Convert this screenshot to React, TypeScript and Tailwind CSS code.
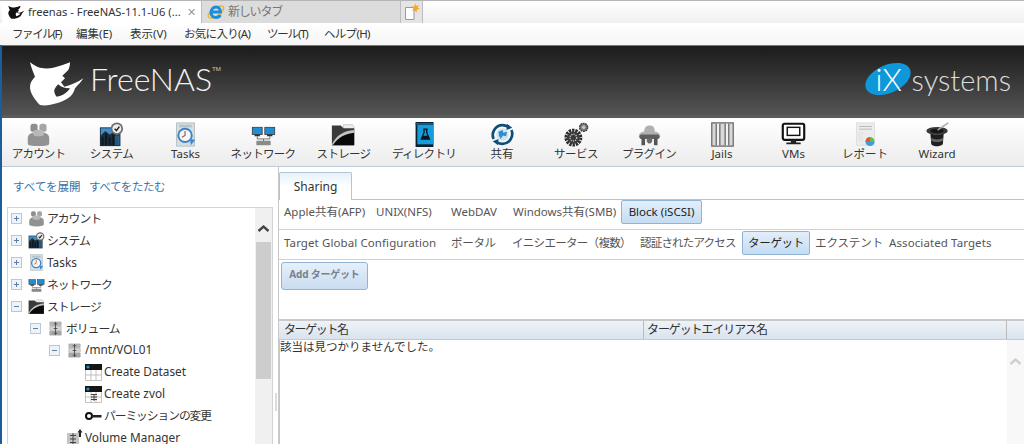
import React from "react";

const jp = "font-['Noto_Sans','Noto_Sans_CJK_JP',sans-serif]";

function Shark({ size = 56, color = "#fff", hole = "#2a2a2a" }: { size?: number; color?: string; hole?: string }) {
  return (
    <svg width={size} height={size * 48 / 56} viewBox="0 0 56 48" className="shrink-0">
      <path fill={color} d="M1 2.3 C5 5 8 7 11 7.7 C16 8.8 20 8.8 24.3 7.7 C30 6.4 36 4.5 41 2.3 C41 5 40.5 8 39.3 10 L33.3 15.7 L36 18.3 L32 22.3 L35.3 26.7 C42 25 49 22 54.3 18.3 C52 22 49 25 46 28.3 C45 32 43.5 34.5 41 36.7 C37 40 32 42 27.7 43.3 C22 45 16 46 11 45 C8 42 6 39.5 4.3 36.7 C2 33 1 30 1 26.7 C1 23 3 20 6 16.7 C4 12 2 7 1 2.3 Z" />
      <path fill={hole} d="M29.3 24.3 C32 27 36 28.5 41 28.3 C38 33 33 36 27.7 36.7 C26 35 25 32 25.3 30 C26 28 27.5 26 29.3 24.3 Z" />
    </svg>
  );
}

function IELogo() {
  return (
    <svg width="18" height="18" viewBox="0 0 18 18" className="shrink-0">
      <ellipse cx="9" cy="9" rx="9" ry="4" fill="none" stroke="#f0b429" strokeWidth="1.4" transform="rotate(-35 9 9)" />
      <path fill="none" stroke="#1c8fdc" strokeWidth="3" d="M4.5 9 H13.5 C13.5 6 11.5 4 9 4 C6 4 4 6.5 4 9.5 C4 12.5 6 14.5 9 14.5 C11 14.5 12.5 13.6 13.3 12" />
    </svg>
  );
}

function NewTabIcon() {
  return (
    <svg width="18" height="18" viewBox="0 0 18 18" className="shrink-0">
      <path d="M2.5 4.5 H11 V16.5 H2.5 Z" fill="#fff" stroke="#9a9a9a" />
      <path d="M12 0 L13 3 L16 2 L14.5 4.5 L17 6 L14 6.5 L13.5 9.5 L11.5 7 L9 8 L10.5 5.5 L8.5 3.5 L11.5 3.5 Z" fill="#f5a623" />
    </svg>
  );
}

const Account = ({ s = 28 }: { s?: number }) => (
  <svg width={s} height={s} viewBox="0 0 28 28" className="shrink-0">
    <rect x="5" y="2" width="8" height="9" rx="3" fill="#8e8e8e" />
    <rect x="15" y="2" width="8" height="9" rx="3" fill="#a5a5a5" />
    <path d="M2 24 V18 C2 14 6 12 9 12 H19 C22 12 26 14 26 18 V24 C26 26 22 27 14 27 C6 27 2 26 2 24 Z" fill="#929292" />
    <rect x="8" y="9" width="12" height="7" rx="3" fill="#b8b8b8" />
  </svg>
);
const SystemI = ({ s = 28 }: { s?: number }) => (
  <svg width={s} height={s} viewBox="0 0 28 28" className="shrink-0">
    <rect x="1" y="6" width="23" height="21" fill="#1b2f3f" />
    <path d="M2 15 L7 10 L12 14 L17 11 L23 14 V7 H2 Z" fill="#3f90c8" />
    <path d="M3 26 V17 H5 V26 Z M7 26 V13 H9 V26 Z M11 26 V17 H13 V26 Z M15 26 V14 H17 V26 Z M19 26 V17 H21 V26 Z" fill="#0d1720" />
    <path d="M18 26 V15 H23 V26 Z" fill="#2f8cc4" opacity=".55" />
    <circle cx="20" cy="7.5" r="7" fill="#6f6f6f" />
    <circle cx="20" cy="7.5" r="5" fill="#eeeeee" />
    <path d="M17.5 7.5 L19.5 9.7 L22.8 5.2" stroke="#222" strokeWidth="1.7" fill="none" />
  </svg>
);
const TasksI = ({ s = 28 }: { s?: number }) => (
  <svg width={s} height={s} viewBox="0 0 28 28" className="shrink-0">
    <rect x="4" y="1" width="20" height="26" fill="#d5dfe0" stroke="#b4bec0" />
    <rect x="7" y="3" width="14" height="3" fill="#b4c4c8" />
    <circle cx="13.5" cy="15" r="7.5" fill="#f7f7f7" stroke="#3f83c4" strokeWidth="2.2" />
    <path d="M13.5 10 V15 L10 17" stroke="#b5562a" strokeWidth="1.3" fill="none" />
    <path d="M19 19 L25 20 L20 26 Z" fill="#3f8ad0" />
  </svg>
);
const NetworkI = ({ s = 28 }: { s?: number }) => (
  <svg width={s} height={s} viewBox="0 0 28 28" className="shrink-0">
    <rect x="1.5" y="6" width="11" height="8" fill="#1f8ed6" stroke="#444" />
    <rect x="15.5" y="6" width="11" height="8" fill="#1f8ed6" stroke="#444" />
    <path d="M4 14 H10 V16 H4 Z M18 14 H24 V16 H18 Z" fill="#333" />
    <path d="M7 16 V19 H21 V16 M14 19 V22" stroke="#666" fill="none" />
    <rect x="6" y="21" width="16" height="5" fill="#8a8a8a" />
  </svg>
);
const StorageI = ({ s = 28 }: { s?: number }) => (
  <svg width={s} height={s} viewBox="0 0 28 28" className="shrink-0">
    <path d="M14 3 H24 L26 6 V11 H14 Z" fill="#ececec" stroke="#c8c8c8" />
    <path d="M1 4 H11 L14 7 H26 V26 H1 Z" fill="#3a3a3a" />
    <path d="M1 26 C8 17 16 13 26 12 V26 Z" fill="#0a0a0a" />
    <path d="M1 25 C6 15 14 10 26 9 V12 C16 13 8 17 2 26 Z" fill="#c4c4c4" />
  </svg>
);
const DirectoryI = ({ s = 28 }: { s?: number }) => (
  <svg width={s} height={s} viewBox="0 0 28 28" className="shrink-0">
    <rect x="4" y="0" width="20" height="28" fill="#0f1f2b" />
    <rect x="6" y="3" width="18" height="22" fill="#139ddd" />
    <rect x="4" y="1" width="20" height="2" fill="#0e5f88" />
    <path d="M12.5 8 H17.5 M13.5 8 V12 L10.5 19 H19.5 L16.5 12 V8" stroke="#0b1620" strokeWidth="1.5" fill="none" />
    <path d="M12.5 15.5 H17.5 L19.5 19 H10.5 Z" fill="#0b1620" />
  </svg>
);
const ShareI = ({ s = 28 }: { s?: number }) => (
  <svg width={s} height={s} viewBox="0 0 28 28" className="shrink-0">
    <circle cx="14" cy="14" r="7" fill="#cfe3f1" />
    <path d="M9.5 11 L14 9 L15 12 L19 11 L18 16 L14.5 15 L12 19 L10 15 Z" fill="#2f8dcf" />
    <path d="M4 19 C1 12 6 3.5 14 3.5 C16.5 3.5 18.5 4.3 20.5 5.5" stroke="#0e4f7a" strokeWidth="3" fill="none" />
    <path d="M24 9 C27 16 22 24.5 14 24.5 C11.5 24.5 9.5 23.7 7.5 22.5" stroke="#0e4f7a" strokeWidth="3" fill="none" />
    <path d="M19 2 L25 6.5 L18.5 9 Z M9 26 L3 21.5 L9.5 19 Z" fill="#0e4f7a" />
  </svg>
);
const ServiceI = ({ s = 28 }: { s?: number }) => (
  <svg width={s} height={s} viewBox="0 0 28 28" className="shrink-0">
    <circle cx="10.5" cy="17.5" r="8" fill="none" stroke="#2c2c2c" strokeWidth="4" strokeDasharray="2.6 1" />
    <circle cx="10.5" cy="17.5" r="7" fill="#3a3a3a" />
    <circle cx="10.5" cy="17.5" r="3.8" fill="none" stroke="#bbb" strokeWidth="1.5" strokeDasharray="1.5 1" />
    <circle cx="22" cy="6" r="4.5" fill="#777" stroke="#444" strokeWidth="1.6" strokeDasharray="2 .8" />
    <circle cx="22" cy="6" r="2" fill="#c4c4c4" />
  </svg>
);
const PluginI = ({ s = 28 }: { s?: number }) => (
  <svg width={s} height={s} viewBox="0 0 28 28" className="shrink-0">
    <path d="M8 11 C8 5 12 4 14 4 C17 4 20 5 20 11 C24 11 26 14 26 16 C26 18 24 19 22 19 H6 C3 19 2 17 2 16 C2 13 5 11 8 11 Z" fill="#b0b0b0" />
    <rect x="3" y="14" width="22" height="5" rx="2" fill="#5e5e5e" />
    <rect x="5" y="18" width="4" height="8" fill="#555" />
    <rect x="19" y="18" width="4" height="8" fill="#555" />
    <path d="M11 18 H17 V22 L15 24 H13 L11 22 Z" fill="#6a6a6a" />
  </svg>
);
const JailsI = ({ s = 28 }: { s?: number }) => (
  <svg width={s} height={s} viewBox="0 0 28 28" className="shrink-0">
    <rect x="2" y="1" width="24" height="26" fill="#d8d8d8" stroke="#666" strokeWidth="1.4" />
    <path d="M7 2 V26 M11 2 V26 M17 2 V26 M21 2 V26" stroke="#777" strokeWidth="1.6" />
    <path d="M9 2 V26 M19 2 V26" stroke="#f5f5f5" strokeWidth="2" />
  </svg>
);
const VmsI = ({ s = 28 }: { s?: number }) => (
  <svg width={s} height={s} viewBox="0 0 28 28" className="shrink-0">
    <rect x="2" y="2" width="24" height="18" rx="2" fill="#fff" stroke="#111" strokeWidth="2.4" />
    <rect x="7" y="6" width="14" height="9" fill="#fff" stroke="#111" strokeWidth="1.6" />
    <path d="M11 20 H17 V23 H22 V25 H6 V23 H11 Z" fill="#222" />
  </svg>
);
const ReportI = ({ s = 28 }: { s?: number }) => (
  <svg width={s} height={s} viewBox="0 0 28 28" className="shrink-0">
    <rect x="4" y="1" width="20" height="25" fill="#ececec" stroke="#ddd" />
    <path d="M7 5 H21 M7 8 H21" stroke="#b5b5b5" />
    <path d="M7 11 V22 M10 11 V22" stroke="#dcdcdc" />
    <circle cx="19" cy="22" r="5" fill="#3f9ae0" />
    <path d="M19 22 L14 22 A5 5 0 0 1 19 17 Z" fill="#e5552f" />
    <path d="M19 22 L19 17 A5 5 0 0 1 24 22 Z" fill="#6abf40" />
  </svg>
);
const WizardI = ({ s = 28 }: { s?: number }) => (
  <svg width={s} height={s} viewBox="0 0 28 28" className="shrink-0">
    <path d="M6 12 C10 15 17 15 21 12 L20 25 C16 28 10 28 7 25 Z" fill="#1e1e1e" />
    <ellipse cx="13.5" cy="10" rx="12" ry="4.5" fill="#3a3a3a" />
    <ellipse cx="13.5" cy="10" rx="7.5" ry="2.5" fill="#161616" />
    <path d="M7 21 C10 23 17 23 20 21 L20.3 18 C16 20 11 20 6.8 18 Z" fill="#666" />
    <path d="M14 9 L26 1" stroke="#aaa" strokeWidth="1.6" />
  </svg>
);

const Volume = ({ s = 16 }: { s?: number }) => (
  <svg width={s} height={s} viewBox="0 0 16 16" className="shrink-0">
    <rect x="2" y="1" width="12" height="4" fill="#b9b9b9" stroke="#999" strokeWidth=".5" />
    <rect x="2" y="6" width="12" height="4" fill="#d4d4d4" stroke="#999" strokeWidth=".5" />
    <rect x="2" y="11" width="12" height="4" fill="#a9a9a9" stroke="#888" strokeWidth=".5" />
    <path d="M8 1 V15 M6 3 H10 M6 8 H10 M6 13 H10" stroke="#444" strokeWidth=".9" />
  </svg>
);
const Dataset = ({ kind }: { kind: "grid" | "vol" }) => (
  <svg width="17" height="17" viewBox="0 0 17 17" className="shrink-0">
    <rect x="0" y="0" width="17" height="6" fill="#151515" />
    <circle cx="3" cy="3" r="1.6" fill="#1f8ed6" />
    <path d="M0.5 6 V16.5 H16.5 V6 M0.5 11 H16.5 M6 6 V16.5 M11 6 V16.5" stroke="#b9b3a8" strokeWidth=".8" fill="none" />
    {kind === "vol" && <path d="M6 8.5 H12 M6 11 H12 M6 13.5 H12 M9 8 V15" stroke="#444" strokeWidth="1" />}
  </svg>
);
const KeyI = () => (
  <svg width="17" height="10" viewBox="0 0 17 10" className="shrink-0">
    <circle cx="4" cy="5" r="3" fill="none" stroke="#111" strokeWidth="2" />
    <path d="M7 4 H16.5 V6.5 H7 Z" fill="#222" />
  </svg>
);
const VolMgr = () => (
  <svg width="18" height="18" viewBox="0 0 18 18" className="shrink-0">
    <g transform="translate(0 3)"><rect x="1" y="1" width="12" height="12" fill="#c4c4c4" /><path d="M7 1 V13 M4 3.5 H10 M4 7 H10 M4 10.5 H10" stroke="#444" /></g>
    <path d="M14 0 L16.5 3.5 H15 V8 H13 V3.5 H11.5 Z" fill="#222" />
  </svg>
);

function PlusBox({ open, size = 11 }: { open?: boolean; size?: number }) {
  return (
    <svg width={size} height={size} viewBox="0 0 11 11" className="shrink-0">
      <rect x=".5" y=".5" width="10" height="10" fill="#eef3f9" stroke="#b9c7d8" />
      <path d={open ? "M3 5.5 H8" : "M3 5.5 H8 M5.5 3 V8"} stroke="#5a7ea6" />
    </svg>
  );
}

const Chevron = ({ color }: { color: string }) => (
  <svg width="13" height="9" viewBox="0 0 13 9" className="shrink-0">
    <path d="M1.5 7 L6.5 2.5 L11.5 7" fill="none" stroke={color} strokeWidth="2.4" />
  </svg>
);

const toolbar: { label: string; w: string; t: string; I: React.FC<{ s?: number }> }[] = [
  { label: "アカウント", w: "w-[73px]", t: "tracking-[-0.8px]", I: Account },
  { label: "システム", w: "w-[73px]", t: "tracking-[-0.5px]", I: SystemI },
  { label: "Tasks", w: "w-[75px]", t: "", I: TasksI },
  { label: "ネットワーク", w: "w-[80px]", t: "tracking-[-0.7px]", I: NetworkI },
  { label: "ストレージ", w: "w-[81px]", t: "tracking-[-0.7px]", I: StorageI },
  { label: "ディレクトリ", w: "w-[80px]", t: "tracking-[-0.7px]", I: DirectoryI },
  { label: "共有", w: "w-[76px]", t: "", I: ShareI },
  { label: "サービス", w: "w-[72px]", t: "tracking-[-0.5px]", I: ServiceI },
  { label: "プラグイン", w: "w-[74px]", t: "tracking-[-0.7px]", I: PluginI },
  { label: "Jails", w: "w-[72px]", t: "", I: JailsI },
  { label: "VMs", w: "w-[71px]", t: "", I: VmsI },
  { label: "レポート", w: "w-[72px]", t: "", I: ReportI },
  { label: "Wizard", w: "w-[72px]", t: "", I: WizardI },
];

const kana = "tracking-[-1px]";
const tree: { label: string; pl: string; t?: string; open?: boolean; box?: boolean; icon: React.ReactNode; gap: string }[] = [
  { label: "アカウント", pl: "pl-[3px]", t: kana, box: true, icon: <Account s={17} />, gap: "ml-[6px]" },
  { label: "システム", pl: "pl-[3px]", t: kana, box: true, icon: <SystemI s={17} />, gap: "ml-[6px]" },
  { label: "Tasks", pl: "pl-[3px]", box: true, icon: <TasksI s={17} />, gap: "ml-[6px]" },
  { label: "ネットワーク", pl: "pl-[3px]", t: kana, box: true, icon: <NetworkI s={17} />, gap: "ml-[6px]" },
  { label: "ストレージ", pl: "pl-[3px]", t: kana, box: true, open: true, icon: <StorageI s={17} />, gap: "ml-[6px]" },
  { label: "ボリューム", pl: "pl-[22px]", t: kana, box: true, open: true, icon: <Volume s={15} />, gap: "ml-[6px]" },
  { label: "/mnt/VOL01", pl: "pl-[41px]", box: true, open: true, icon: <Volume s={15} />, gap: "ml-[6px]" },
  { label: "Create Dataset", pl: "pl-[77px]", icon: <Dataset kind="grid" />, gap: "" },
  { label: "Create zvol", pl: "pl-[77px]", icon: <Dataset kind="vol" />, gap: "" },
  { label: "パーミッションの変更", pl: "pl-[77px]", t: "tracking-[-1.1px]", icon: <KeyI />, gap: "" },
  { label: "Volume Manager", pl: "pl-[58px]", icon: <VolMgr />, gap: "" },
];

const sub1: [string, string, boolean?][] = [
  ["Apple共有(AFP)", "w-[92px]"],
  ["UNIX(NFS)", "w-[75px]"],
  ["WebDAV", "w-[62px]"],
  ["Windows共有(SMB)", "w-[108px]"],
  ["Block (iSCSI)", "w-[81px]", true],
];
const sub2: [string, string, boolean?][] = [
  ["Target Global Configuration", "w-[167px] tracking-[0.1px]"],
  ["ポータル", "w-[61px] tracking-[-0.3px]"],
  ["イニシエーター（複数）", "w-[128px] tracking-[-0.7px]"],
  ["認証されたアクセス", "w-[102px] tracking-[-0.8px]"],
  ["ターゲット", "w-[68px] tracking-[-0.3px]", true],
  ["エクステント", "w-[79px] pl-[5px] tracking-[-0.1px]"],
  ["Associated Targets", "w-[110px] tracking-[0.1px]"],
];

function SubTab({ label, w, active }: { label: string; w: string; active?: boolean }) {
  return (
    <div className={`${w} h-[24px] shrink-0 flex items-center whitespace-nowrap text-[11.5px] rounded-[2px] ${active ? "justify-center border border-[#8fb4d6] bg-gradient-to-b from-[#e3eefa] to-[#c5dcf3] text-[#222]" : "text-[#555]"}`}>
      {label}
    </div>
  );
}

export default function App() {
  return (
    <div className={`w-[1024px] h-[444px] overflow-hidden bg-white flex flex-col ${jp}`}>
      {/* browser tabs */}
      <div className="h-[23px] flex bg-gradient-to-b from-white to-[#f0f0f0] border-t border-[#b5b5b5] shrink-0">
        <div className="ml-[2px] w-[199px] bg-white flex items-center pl-[6px] text-[11.2px] text-[#333]">
          <Shark size={17} color="#111" hole="#fff" />
          <span className="ml-[3px] whitespace-nowrap">freenas - FreeNAS-11.1-U6 (...</span>
          <span className="ml-[6px] text-[#999] text-[11px]">✕</span>
        </div>
        <div className="w-[200px] bg-[#dcdcdc] border-l border-r border-[#bdbdbd] flex items-center pl-[5px] text-[12px] text-[#777]">
          <IELogo />
          <span className="ml-[3px] tracking-[-1.2px]">新しいタブ</span>
        </div>
        <div className="w-[22px] bg-[#e4e4e4] border-r border-[#bdbdbd] flex items-center justify-center">
          <NewTabIcon />
        </div>
      </div>
      {/* menu */}
      <div className="h-[22px] shrink-0 flex items-center pl-[12px] bg-gradient-to-b from-white to-[#f5f5f5] text-[11.5px] text-[#333] whitespace-nowrap">
        <span className="w-[64px] tracking-[-1.4px]">ファイル(F)</span>
        <span className="w-[54px]">編集(E)</span>
        <span className="w-[54px]">表示(V)</span>
        <span className="w-[83px] tracking-[-0.7px]">お気に入り(A)</span>
        <span className="w-[57px] tracking-[-1.2px]">ツール(T)</span>
        <span className="tracking-[-0.7px]">ヘルプ(H)</span>
      </div>
      <div className="flex-1 flex flex-col border-l-2 border-[#1f5c9c] min-h-0">
        {/* header */}
        <div className="h-[70px] shrink-0 bg-gradient-to-b from-[#1c1c1c] to-[#555555] flex items-start pl-[27px] pr-[13px] border-t border-[#777]">
          <div className="mt-[14px] shrink-0"><Shark size={56} hole="#333" /></div>
          <div className="ml-[5px] mt-[15px] text-[32px] leading-[36px] text-[#f2f2f2] font-['Lato',sans-serif] font-light">FreeNAS</div>
          <span className="mt-[20px] text-[6px] leading-[6px] text-[#ccc]">TM</span>
          <div className="flex-1" />
          <div className="relative mt-[16px] w-[46px] h-[34px] shrink-0">
            <div className="absolute left-[-1px] top-[3px] w-[48px] h-[28px] rounded-[50%] bg-[#0f98d9] -rotate-[24deg]" />
            <span className="absolute left-[11px] top-[0px] text-[31px] leading-[34px] text-white font-['Lato',sans-serif] font-light">iX</span>
          </div>
          <div className="ml-[1px] mt-[16px] text-[29px] leading-[36px] text-[#dcdcdc] font-['Lato',sans-serif] font-light">systems</div>
        </div>
        {/* toolbar */}
        <div className="h-[52px] shrink-0 border-t-[3px] border-b border-t-[#5c5c5c] border-b-[#bccad9] bg-gradient-to-b from-white to-[#ececec] flex">
          <div className="flex pt-[3px]">
            {toolbar.map(({ label, w, t, I }) => (
              <div key={label} className={`${w} flex flex-col items-center text-[11.5px] leading-[14px] text-[#333] whitespace-nowrap`}>
                <div className="h-[26px] flex items-center"><I s={25} /></div>
                <span className={t}>{label}</span>
              </div>
            ))}
          </div>
        </div>
        {/* body */}
        <div className="flex-1 flex min-h-0">
          {/* left */}
          <div className="w-[276px] shrink-0 flex flex-col">
            <div className="h-[40px] shrink-0 flex items-center pl-[11px] text-[11.5px] text-[#3d73a8] whitespace-nowrap">
              <span className="w-[76px]">すべてを展開</span>
              <span className="tracking-[-0.4px]">すべてをたたむ</span>
            </div>
            <div className="flex-1 ml-[5px] flex min-h-0">
              <div className="flex-1 flex border-l border-t border-r border-[#d3d3d3] min-w-0">
                <div className="flex-1 min-w-0 overflow-hidden">
                  {tree.map((r) => (
                    <div key={r.label} className={`h-[21.9px] flex items-center ${r.pl} text-[11.8px] text-[#333] whitespace-nowrap`}>
                      {r.box && <PlusBox open={r.open} />}
                      <div className={`${r.gap} w-[17px] flex justify-center shrink-0`}>{r.icon}</div>
                      <span className={`ml-[2px] ${r.t ?? ""}`}>{r.label}</span>
                    </div>
                  ))}
                </div>
                <div className="w-[17px] shrink-0 bg-[#f0f0f0] flex flex-col items-center">
                  <div className="h-[34px] pt-[6px] w-full flex items-center justify-center"><Chevron color="#444" /></div>
                  <div className="h-[137px] w-[15px] bg-[#cdcdcd]" />
                </div>
              </div>
              <div className="w-[5px] shrink-0 pl-[2px] pt-[186px]">
                <div className="w-[2px] h-[18px] bg-[#dcdcdc]" />
              </div>
            </div>
          </div>
          {/* splitter */}
          <div className="w-[1px] bg-[#c8c8c8]" />
          {/* right */}
          <div className="flex-1 flex flex-col min-w-0">
            <div className="flex h-[33px] shrink-0 pt-[5px]">
              <div className="w-[73px] rounded-t-[2px] border border-b-0 border-[#b4c4d4] bg-gradient-to-b from-[#e6f1fb] via-white to-white flex items-center justify-center text-[12px] text-[#333]">Sharing</div>
              <div className="flex-1 border-b border-[#b4c4d4]" />
            </div>
            <div className="h-[30px] shrink-0 border-b border-[#c8d3df] flex items-center pl-[5px] pb-[5px]">
              {sub1.map(([l, w, a]) => <SubTab key={l} label={l} w={w} active={a} />)}
            </div>
            <div className="h-[30px] shrink-0 border-b border-[#c8d3df] flex items-center pl-[5px] pb-[4px]">
              {sub2.map(([l, w, a]) => <SubTab key={l} label={l} w={w} active={a} />)}
            </div>
            <div className="ml-[2px] mt-[2px] w-[87px] h-[28px] shrink-0 rounded-[3px] border border-[#8fb4d6] bg-gradient-to-b from-[#e6f0fa] to-[#c9dcf0] flex items-center justify-center pb-[3px] text-[10px] font-bold tracking-[-0.2px] text-[#76828e]">
              Add ターゲット
            </div>
            <div className="mt-[29px] flex h-[21px] shrink-0 border-t-2 border-b border-[#c9c9c9] bg-gradient-to-b from-[#eef3f8] to-[#d9e3ee] text-[12px] text-[#333] whitespace-nowrap">
              <div className="w-[365px] pl-[5px] border-r border-[#bbb] flex items-center tracking-[-1.4px]">ターゲット名</div>
              <div className="w-[363px] pl-[3px] border-r border-[#bbb] flex items-center tracking-[-1.1px]">ターゲットエイリアス名</div>
              <div className="flex-1" />
            </div>
            <div className="flex-1 flex min-h-0 border-l border-[#c8c8c8]">
              <div className="flex-1 text-[11.5px] leading-[14px] text-[#333]">該当は見つかりませんでした。</div>
              <div className="w-[17px] shrink-0 bg-[#f8f8f8] flex justify-center pt-[17px]"><Chevron color="#cfcfcf" /></div>
            </div>
          </div>
        </div>
      </div>
    </div>
  );
}
